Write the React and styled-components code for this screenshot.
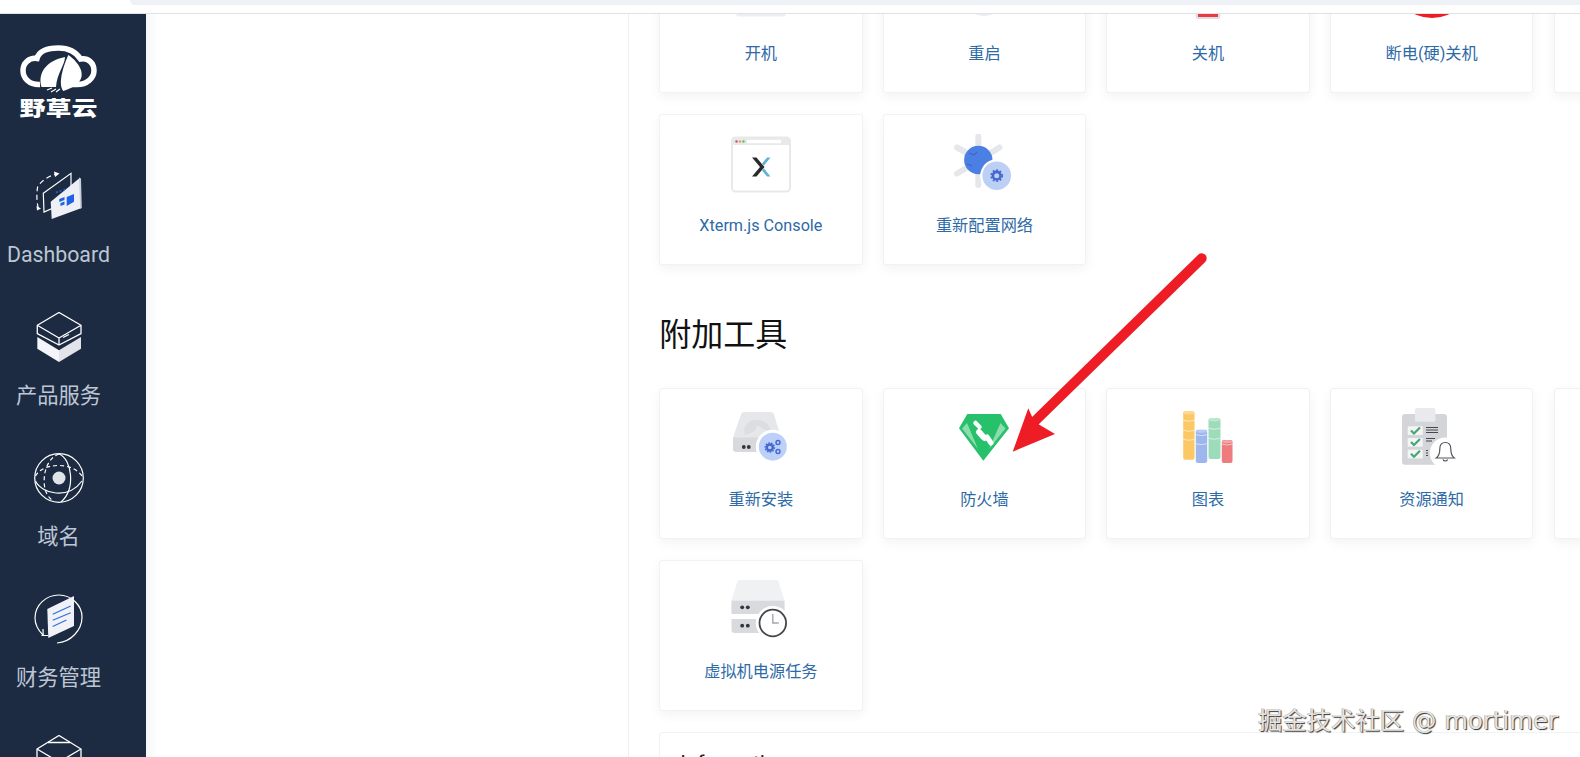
import React from 'react'
import styled, { createGlobalStyle } from 'styled-components'

const Global = createGlobalStyle`
  html, body {
    margin: 0;
    height: 100%;
    overflow: hidden;
    background: #fff;
    font-family: Roboto, "Noto Sans CJK SC", sans-serif;
  }
`;

const Page = styled.div`
  position: relative;
  display: flex;
  flex-direction: column;
  width: 100%;
  height: 100vh;
  overflow: hidden;
`;

const TopBar = styled.div`
  flex: none;
  height: 13px;
  padding-left: 130px;
  background: #fff;
  border-bottom: 1px solid #dfe1e5;
`;

const AddressBar = styled.div`
  height: 5px;
  background: #eef1f6;
  border-bottom-left-radius: 10px;
`;

const Body = styled.div`
  flex: 1;
  display: flex;
  min-height: 0;
`;

const Sidebar = styled.nav`
  flex: none;
  width: 146px;
  box-sizing: border-box;
  padding-right: 29px;
  overflow: hidden;
  background: #1c2b41;
`;

const Logo = styled.div`
  display: flex;
  flex-direction: column;
  align-items: center;
  height: 106px;
  padding-top: 31px;
`;

const LogoText = styled.div`
  margin-top: 4px;
  font-size: 26px;
  line-height: 24px;
  font-weight: 900;
  color: #fff;
  white-space: pre;
  transform: scaleY(0.78);
`;

const NavItem = styled.div`
  display: flex;
  flex-direction: column;
  align-items: center;
  height: 141px;
  padding-top: 20px;
  box-sizing: border-box;
`;

const NavIcon = styled.svg`
  display: block;
  flex: none;
  width: 50px;
  height: 50px;
`;

const NavLabel = styled.div`
  margin-top: 18.5px;
  font-size: 21.3px;
  line-height: 30px;
  color: #bcc6d4;
  white-space: pre;
`;

const SidePanel = styled.div`
  flex: none;
  width: 483px;
  box-sizing: border-box;
  border-right: 1px solid #eceef1;
  background: linear-gradient(to right, #f6f7f9, #fff 12px);
`;

const Content = styled.main`
  flex: 1;
  min-width: 0;
  overflow: hidden;
  padding-left: 30.2px;
`;

const Scroller = styled.div`
  margin-top: -72.3px;
`;

const CardGrid = styled.div`
  display: grid;
  grid-template-columns: repeat(5, 203.4px);
  grid-auto-rows: 151.3px;
  gap: 20.6px 20.2px;
`;

const Card = styled.div`
  display: flex;
  flex-direction: column;
  align-items: center;
  box-sizing: border-box;
  padding-top: 19px;
  background: #fff;
  border: 1px solid #f1f2f4;
  border-radius: 3px;
  box-shadow: 0 4px 12px rgba(0, 0, 0, 0.05);
`;

const CardIcon = styled.svg`
  display: block;
  flex: none;
  width: 60px;
  height: 60px;
`;

const CardLabel = styled.div`
  margin-top: 20px;
  font-size: 16.2px;
  line-height: 24px;
  color: #2d6aa6;
  white-space: pre;
`;

const SectionTitle = styled.h2`
  margin: 50.4px 0 32.7px;
  font-size: 32px;
  line-height: 40px;
  font-weight: 400;
  color: #111;
`;

const InfoCard = styled.div`
  width: 1100px;
  height: 120px;
  margin-top: 20.9px;
  box-sizing: border-box;
  padding: 15px 20px;
  background: #fff;
  border: 1px solid #f1f2f4;
  border-radius: 3px;
`;

const InfoTitle = styled.div`
  font-size: 20.8px;
  line-height: 30px;
  color: #222;
`;

const Overlay = styled.svg`
  position: absolute;
  left: 0;
  top: 0;
  width: 1580px;
  height: 757px;
  pointer-events: none;
`;

const Watermark = styled.div`
  position: absolute;
  right: 22px;
  bottom: 21px;
  font-family: "DejaVu Sans", "Noto Sans CJK SC", sans-serif;
  font-size: 24.4px;
  line-height: 30px;
  color: #e4e4e4;
  text-shadow: 1px 1px 1px #333, -0.5px -0.5px 0 #999;
  white-space: pre;
`;

const DashboardIcon = () => (
  <NavIcon viewBox="0 0 50 50" fill="none">
    <path d="M9.3 22.3 37 2.3V29L10 41Z" stroke="#fff" strokeWidth="1.2" />
    <path d="M16.7 30.7 46 6.7l1 30.6L17.7 48Z" fill="#eef0f6" />
    <path d="M45 6.5 47 7.5l.8 29.6-1.6.6Z" fill="#c8cedb" />
    <path d="M4.3 37.3C2.5 30 2.5 22 3.7 15.7 8 9 15 5 22 3" stroke="#fff" strokeWidth="1.2" strokeDasharray="5 3.5" />
    <path d="M20 .5 25.5 2.5 21 6Z" fill="#fff" />
    <path d="M2.5 35 7 37.5 3 39.5Z" fill="#fff" />
    <path d="M32.7 26 40 23v7.7L32.7 35Z" fill="#1e62e6" />
    <path d="M25.3 28 30.5 26v3L25.3 31Z M26.5 32 30.5 30.5v3L26.5 35Z" fill="#1e62e6" />
    <path d="M22 21.5l2-.8M25.5 20.3l2-.8M29.5 19l2-.8" stroke="#1e62e6" strokeWidth="1.4" />
  </NavIcon>
);

const ProductIcon = () => (
  <NavIcon viewBox="0 0 50 50" fill="none">
    <path d="M3.3 25 25 38.3V50L3.3 36.7Z" fill="#f4f5f8" />
    <path d="M47 25 25 38.3V50L47 36.7Z" fill="#e2e4ea" />
    <path d="M25 .5 47 13.3 25 26 3.3 13.3Z M3.3 13.3v8.4L25 33 47 21.7v-8.4 M25 26v7" stroke="#fff" strokeWidth="1.3" strokeLinejoin="round" />
    <path d="M29 25.5l6-3" stroke="#fff" strokeWidth="1.3" />
  </NavIcon>
);

const DomainIcon = () => (
  <NavIcon viewBox="0 0 50 50" fill="none" stroke="#fff" strokeWidth="1.2">
    <circle cx="25" cy="25" r="24.3" />
    <circle cx="25" cy="25" r="6.5" fill="#dfe3ea" stroke="none" />
    <path d="M25 1C38 6 42 36 27 49" />
    <path d="M1.5 28C8 41 34 47 48 28" />
    <path d="M25 1C13 5 8 22 11 36c1 4 4 9 7 11" strokeDasharray="4 3" />
    <path d="M1.5 23C8 10 38 8 48 23" strokeDasharray="4 3" />
  </NavIcon>
);

const FinanceIcon = () => (
  <NavIcon viewBox="0 0 50 50" fill="none">
    <path d="M9 41C3 35 1 29 1 24 1 11 12 1 25 1c12 0 23 10 23 22 0 13-11 25-25 26" stroke="#fff" strokeWidth="1.2" />
    <path d="M7.5 41.5h6.5M9 35l.2 6.500" stroke="#fff" strokeWidth="1.2" />
    <path d="M13.3 15 40 2v30L14.3 44Z" fill="#f0f2f8" />
    <path d="M18.7 20.3 36.7 12M18.7 26.3 36.7 18.7M18.7 32.5 32.5 26" stroke="#2f6fdc" strokeWidth="1.2" />
  </NavIcon>
);

const MailIcon = () => (
  <NavIcon viewBox="0 0 50 50" fill="none" stroke="#fff" strokeWidth="1.3">
    <path d="M3 14 25 .5 47 14v22L25 49 3 36Z" />
    <path d="M3 14 25 27 47 14M14 7.5h22M16 22l-8 4M34 22l8 4" />
  </NavIcon>
);

const navItems = [
  { label: 'Dashboard', icon: <DashboardIcon /> },
  { label: '产品服务', icon: <ProductIcon /> },
  { label: '域名', icon: <DomainIcon /> },
  { label: '财务管理', icon: <FinanceIcon /> },
  { label: '', icon: <MailIcon /> },
];

const PowerOnIcon = () => (
  <CardIcon viewBox="0 0 60 60">
    <rect x="5" y="30" width="50" height="24.5" rx="3" fill="#eeeff1" />
  </CardIcon>
);

const RestartIcon = () => (
  <CardIcon viewBox="0 0 60 60">
    <circle cx="30" cy="30" r="24" fill="#eeeff1" />
  </CardIcon>
);

const ShutdownIcon = () => (
  <CardIcon viewBox="0 0 60 60">
    <rect x="17.5" y="30" width="25" height="27" rx="3" fill="#dfe0e4" />
    <rect x="20" y="30" width="20" height="25" fill="#ec3a45" />
  </CardIcon>
);

const HardOffIcon = () => (
  <CardIcon viewBox="0 0 60 60">
    <circle cx="30" cy="16" r="40" fill="#ee1c25" />
  </CardIcon>
);

const XtermIcon = () => (
  <CardIcon viewBox="0 0 60 60">
    <rect x="1" y="3.5" width="58" height="54" rx="3.5" fill="#fff" stroke="#e8e9eb" strokeWidth="2" />
    <path d="M1 7a3.5 3.5 0 0 1 3.5-3.5h51A3.5 3.5 0 0 1 59 7v4H1Z" fill="#e8e9eb" />
    <circle cx="5.5" cy="7.5" r="1.2" fill="#e0457b" />
    <circle cx="9" cy="7.5" r="1.2" fill="#e9a23b" />
    <circle cx="12.5" cy="7.5" r="1.2" fill="#5dbb63" />
    <rect x="16" y="5.8" width="34" height="3.4" fill="#fff" />
    <path d="M21 23.5h4.5l8 9.5-8 9.5H21l8-9.5Z" fill="#2a2a2c" />
    <path d="M39.5 23.5h-3.4L31 29.5l1.8 2.200Zm0 19h-3.4L31 36.5l1.8-2.200Z" fill="#5fb3d3" />
  </CardIcon>
);

const NetworkIcon = () => (
  <CardIcon viewBox="0 0 60 60">
    <path d="M24.3 2.500v12M3 13.500l12 6.500M45.500 13.500 35 20M3 39.500l12-7M24.300 51V39" stroke="#e6e7ea" strokeWidth="6" strokeLinecap="round" />
    <circle cx="24.300" cy="26" r="14.200" fill="#4c7fe3" />
    <path d="M15 19l5 2 3-3M27 38l3-5 6-1M13 30l5 2" fill="none" stroke="#3a68c8" strokeWidth="1.200" />
    <circle cx="42.700" cy="41.700" r="16.500" fill="#fff" />
    <circle cx="42.700" cy="41.700" r="14.300" fill="#bcd0f5" />
    <circle cx="42.700" cy="41.700" r="3.800" fill="none" stroke="#4468cf" strokeWidth="2.600" />
    <circle cx="42.700" cy="41.700" r="5.600" fill="none" stroke="#4468cf" strokeWidth="1.600" strokeDasharray="1.800 1.800" />
  </CardIcon>
);

const ReinstallIcon = () => (
  <CardIcon viewBox="0 0 60 60">
    <path d="M10 6.500a3 3 0 0 1 3-2.500h27a3 3 0 0 1 3 2.500l7 23v11.500H2V29.500Z" fill="#e6e7ea" />
    <path d="M14 27c-3-8 3-15 12-15 8 0 13 5 14 12l-6-2-8-5-2 6Z" fill="#dcdde0" />
    <path d="M2 29.500h48V41a3 3 0 0 1-3 3H5a3 3 0 0 1-3-3Z" fill="#d8d9dd" />
    <circle cx="12.800" cy="39" r="1.900" fill="#33353a" />
    <circle cx="17.800" cy="39" r="1.900" fill="#33353a" />
    <circle cx="41.800" cy="38.700" r="17" fill="#fff" />
    <circle cx="41.800" cy="38.700" r="14" fill="#bcd0f8" />
    <circle cx="38.800" cy="39.500" r="3" fill="none" stroke="#4468cf" strokeWidth="2.400" />
    <circle cx="38.800" cy="39.500" r="4.600" fill="none" stroke="#4468cf" strokeWidth="1.400" strokeDasharray="1.500 1.300" />
    <circle cx="47" cy="34.500" r="2" fill="none" stroke="#4468cf" strokeWidth="1.400" />
    <circle cx="47" cy="43.500" r="2" fill="none" stroke="#4468cf" strokeWidth="1.400" />
  </CardIcon>
);

const FirewallIcon = () => (
  <CardIcon viewBox="0 0 60 60">
    <path d="M13.300 6h33.400L55 20.300 29.300 52.700 5 20.300Z" fill="#27c06b" />
    <path d="M8 20.500 13 15 24 41Z M51.500 20.500 46.500 15 35 41Z" fill="#8bdcae" />
    <g fill="none" stroke="#fff" strokeLinecap="round">
      <path d="M21.500 15 25.500 19" strokeWidth="4.500" />
      <path d="M25 24C27 26 28 28 30.500 30" strokeWidth="6" />
      <path d="M33 29 37 35" strokeWidth="5" />
    </g>
  </CardIcon>
);

const ChartColumn = ({ x, y, w, h, color, band, lines }) => (
  <g>
    <rect x={x} y={y} width={w} height={h} rx="2" fill={color} />
    <ellipse cx={x + w / 2} cy={y + 1.6} rx={w / 2} ry="1.6" fill={band} />
    {lines.map(l => (
      <path key={l} d={`M${x} ${y + l}q${w / 2} 2 ${w} 0`} fill="none" stroke="#fff" strokeOpacity=".7" strokeWidth=".8" />
    ))}
  </g>
);

const ChartIcon = () => (
  <CardIcon viewBox="0 0 60 60">
    <ChartColumn x={5.2} y={3.3} w={11.3} h={48.4} color="#fcc865" band="#fdd98f" lines={[9, 19, 28]} />
    <ChartColumn x={17.8} y={21.7} w={11.4} h={33.3} color="#9db6ee" band="#b7caf3" lines={[5, 14]} />
    <ChartColumn x={30.5} y={10.3} w={12} h={40.7} color="#9ddcb9" band="#bde8d0" lines={[10, 20]} />
    <ChartColumn x={43.8} y={32} w={10.7} h={23} color="#ee7b7d" band="#f4a5a6" lines={[4]} />
  </CardIcon>
);

const NoticeIcon = () => (
  <CardIcon viewBox="0 0 60 60">
    <rect x="0" y="6" width="45" height="50.700" rx="3" fill="#d4d5d8" />
    <rect x="13" y="0" width="20.500" height="13.700" rx="2" fill="#e9eaed" />
    <rect x="5.700" y="18.300" width="15" height="8.700" fill="#f4f4f5" />
    <rect x="5.700" y="30" width="15" height="8.700" fill="#f4f4f5" />
    <rect x="5.700" y="41.700" width="15" height="8.700" fill="#f4f4f5" />
    <path d="M9 22.500l3 3 6-6M9 34l3 3 6-6M9 45.700l3 3 6-6" fill="none" stroke="#43a877" strokeWidth="2.200" />
    <path d="M24 19.500h12M24 22h12M24 24.500h12M24 30.500h9M24 33h6M24 42.500h2M24 45h2M24 47.500h2" stroke="#444750" strokeWidth="1.100" />
    <circle cx="43.300" cy="45" r="15.500" fill="#fff" />
    <path d="M43.300 34.500c-4 0-5.500 3-5.500 6.500 0 5-1 7-3.500 9h18c-2.500-2-3.500-4-3.500-9 0-3.500-1.500-6.500-5.500-6.500Z" fill="#fff" stroke="#55575c" strokeWidth="1.200" />
    <path d="M41 51.500a2.500 2.500 0 0 0 4.600 0" fill="none" stroke="#55575c" strokeWidth="1.200" />
  </CardIcon>
);

const TaskIcon = () => (
  <CardIcon viewBox="0 0 60 60">
    <path d="M6 3a3 3 0 0 1 3-3h36a3 3 0 0 1 3 3l5.500 17.500V34H.5V20.500Z" fill="#f0f1f3" />
    <rect x=".5" y="20.700" width="53" height="13.300" fill="#d9dadd" />
    <path d="M.5 39h53v11a3 3 0 0 1-3 3h-47a3 3 0 0 1-3-3Z" fill="#d9dadd" />
    <circle cx="11.200" cy="27.300" r="1.900" fill="#33353a" />
    <circle cx="16.800" cy="27.300" r="1.900" fill="#33353a" />
    <circle cx="11.200" cy="45.700" r="1.900" fill="#33353a" />
    <circle cx="16.800" cy="45.700" r="1.900" fill="#33353a" />
    <circle cx="41.800" cy="43" r="17" fill="#fff" />
    <circle cx="41.800" cy="43" r="13.300" fill="#fff" stroke="#44464b" strokeWidth="1.800" />
    <path d="M41.800 34v9h6" fill="none" stroke="#a4a6aa" strokeWidth="1.400" />
  </CardIcon>
);

const Tool = ({ label, icon }) => (
  <Card>
    {icon || <CardIcon as="div" />}
    <CardLabel>{label}</CardLabel>
  </Card>
);

const powerTools = [
  { label: '开机', icon: <PowerOnIcon /> },
  { label: '重启', icon: <RestartIcon /> },
  { label: '关机', icon: <ShutdownIcon /> },
  { label: '断电(硬)关机', icon: <HardOffIcon /> },
  { label: '' },
  { label: 'Xterm.js Console', icon: <XtermIcon /> },
  { label: '重新配置网络', icon: <NetworkIcon /> },
];

const extraTools = [
  { label: '重新安装', icon: <ReinstallIcon /> },
  { label: '防火墙', icon: <FirewallIcon /> },
  { label: '图表', icon: <ChartIcon /> },
  { label: '资源通知', icon: <NoticeIcon /> },
  { label: '' },
  { label: '虚拟机电源任务', icon: <TaskIcon /> },
];

export default function App() {
  return (
    <Page>
      <Global />
      <TopBar>
        <AddressBar />
      </TopBar>
      <Body>
        <Sidebar>
          <Logo>
            <svg width="78" height="48" viewBox="0 0 78 48" fill="none">
              <path d="M20 39.500C9 40 3 33 3 25.500 3 18 9 12.500 17 13.500 19 6 28 3 38.500 3 48 3 56 7 60.500 14 68 12.500 74 18 74 25.500 74 33 67 39.500 57 39.500H46" stroke="#fff" strokeWidth="5.500" />
              <path d="M21.500 42C17 26 29 15 45 12 45 20 37 28 36 42Z" fill="#fff" />
              <path d="M48.300 10C60 18 66 30 58 38 54 42 49 44 43.300 46 38 40 42 24 48.300 10Z" fill="#fff" />
              <path d="M27 45l5-2M31 47l5-3M36 47l4-3" stroke="#fff" strokeWidth="1.200" />
            </svg>
            <LogoText>野草云</LogoText>
          </Logo>
          {navItems.map((item, i) => (
            <NavItem key={i}>
              {item.icon}
              {item.label && <NavLabel>{item.label}</NavLabel>}
            </NavItem>
          ))}
        </Sidebar>
        <SidePanel />
        <Content>
          <Scroller>
            <CardGrid>
              {powerTools.map((t, i) => <Tool key={i} {...t} />)}
            </CardGrid>
            <SectionTitle>附加工具</SectionTitle>
            <CardGrid>
              {extraTools.map((t, i) => <Tool key={i} {...t} />)}
            </CardGrid>
            <InfoCard>
              <InfoTitle>Information</InfoTitle>
            </InfoCard>
          </Scroller>
        </Content>
      </Body>
      <Overlay viewBox="0 0 1580 757">
        <path d="M1201.700 258.300 1034 422" stroke="#ee1c25" strokeWidth="10" strokeLinecap="round" />
        <path d="M1012.700 451.700 1028.300 408.300 1034.300 421.700 1055 434Z" fill="#ee1c25" />
      </Overlay>
      <Watermark>掘金技术社区 @ mortimer</Watermark>
    </Page>
  )
}
